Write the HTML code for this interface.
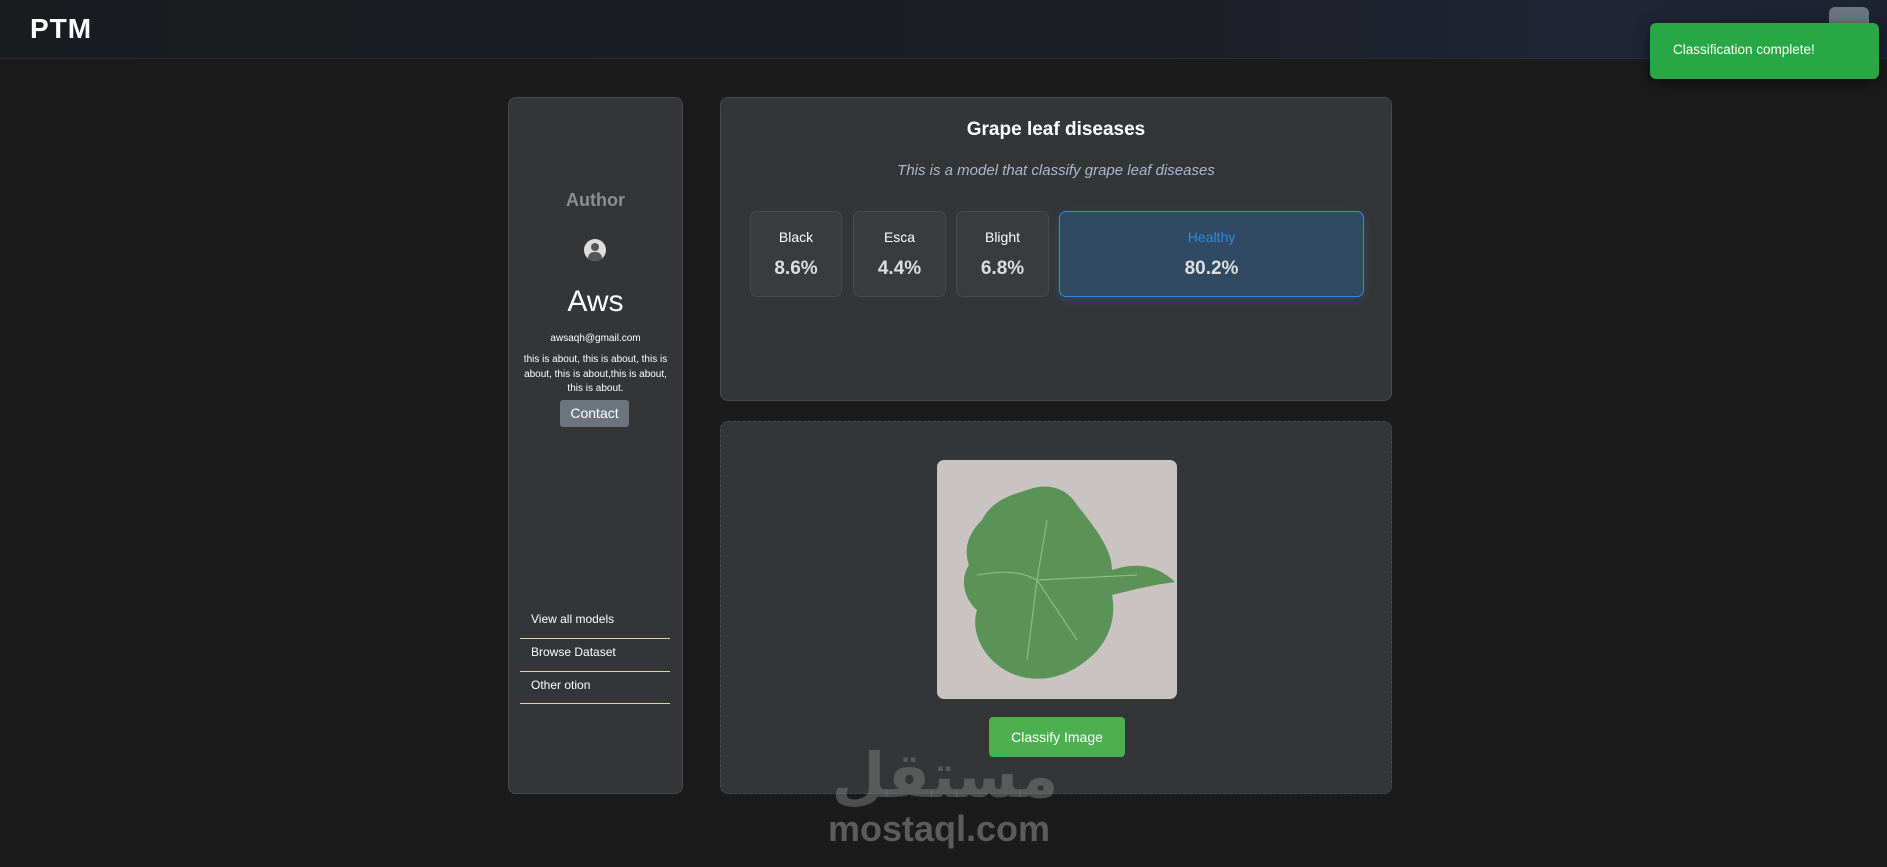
<!DOCTYPE html>
<html><head><meta charset="utf-8"><style>
*{box-sizing:border-box;margin:0;padding:0}
body{width:1887px;height:867px;background:#1b1b1c;font-family:"Liberation Sans",sans-serif;position:relative;overflow:hidden;color:#fff}
.hdr{position:absolute;left:0;top:0;width:1887px;height:59px;background:linear-gradient(90deg,#1a1b1f 0%,#1c1e24 60%,#202536 85%,#1d2130 100%);border-bottom:1px solid #23303a}
.logo{position:absolute;left:30px;top:13px;font-size:28px;font-weight:bold;letter-spacing:1px}
.card{position:absolute;background:#343537;border:1px solid #48494c;border-radius:8px}
.c{position:absolute;text-align:center}
.pc{position:absolute;top:211px;height:86px;background:#3a3b3e;border:1px solid #4a4b4e;border-radius:7px;text-align:center}
.pc .l{position:absolute;top:17px;width:100%;font-size:14px;color:#fff}
.pc .v{position:absolute;top:46px;width:100%;font-size:19px;color:#ddd;font-weight:bold}
.lk{position:absolute;left:520px;width:150px;border-bottom:1px solid #e8d2a8;font-size:12px;color:#fff;padding-left:11px}
</style></head><body>
<div class="hdr"><div class="logo">PTM</div></div>
<div style="position:absolute;left:1829px;top:7px;width:40px;height:30px;background:#6c757d;border-radius:6px"></div>
<div style="position:absolute;left:1650px;top:23px;width:229px;height:56px;background:#28a745;border-radius:6px;box-shadow:0 4px 14px rgba(0,0,0,.5);font-size:13.5px;color:#fff;padding:19px 0 0 23px">Classification complete!</div>

<div class="card" style="left:508px;top:97px;width:175px;height:697px"></div>
<div class="c" style="left:508px;width:175px;top:190px;font-size:18px;font-weight:bold;color:#8e8e8e">Author</div>
<div style="position:absolute;left:584px;top:239px;width:22px;height:22px;border-radius:50%;background:#ddd;overflow:hidden">
 <div style="position:absolute;left:7px;top:4px;width:8px;height:8px;border-radius:50%;background:#555"></div>
 <div style="position:absolute;left:4px;top:13px;width:14px;height:10px;border-radius:6px 6px 0 0;background:#555"></div></div>
<div class="c" style="left:508px;width:175px;top:285px;font-size:30px">Aws</div>
<div class="c" style="left:508px;width:175px;top:333px;font-size:10px">awsaqh@gmail.com</div>
<div class="c" style="left:518px;width:155px;top:353px;font-size:10px;line-height:14.5px">this is about, this is about, this is about, this is about,this is about, this is about.</div>
<div style="position:absolute;left:560px;top:400px;width:69px;height:27px;background:#6c757d;border-radius:3px;font-size:14px;text-align:center;line-height:27px">Contact</div>
<div class="lk" style="top:612px;height:27px">View all models</div>
<div class="lk" style="top:645px;height:27px">Browse Dataset</div>
<div class="lk" style="top:678px;height:26px">Other otion</div>

<div class="card" style="left:720px;top:97px;width:672px;height:304px"></div>
<div class="c" style="left:720px;width:672px;top:119px;font-size:19px;font-weight:bold">Grape leaf diseases</div>
<div class="c" style="left:720px;width:672px;top:162px;font-size:15px;font-style:italic;color:#a9b9d3">This is a model that classify grape leaf diseases</div>
<div class="pc" style="left:750px;width:92px"><div class="l">Black</div><div class="v">8.6%</div></div>
<div class="pc" style="left:853px;width:93px"><div class="l">Esca</div><div class="v">4.4%</div></div>
<div class="pc" style="left:956px;width:93px"><div class="l">Blight</div><div class="v">6.8%</div></div>
<div class="pc" style="left:1059px;width:305px;background:#2f4a62;border-color:#2f8be6;box-shadow:0 3px 10px rgba(47,139,230,.25)"><div class="l" style="color:#2f8be6">Healthy</div><div class="v">80.2%</div></div>

<div class="card" style="left:720px;top:421px;width:672px;height:373px;border-style:dashed"></div>
<div style="position:absolute;left:937px;top:460px;width:240px;height:239px;background:#c9c3c2;border-radius:7px;overflow:hidden">
<svg width="240" height="239" viewBox="0 0 240 239"><path d="M55 200 C40 185 35 165 40 150 C28 140 22 120 32 105 C25 85 35 70 45 60 C55 40 75 35 90 30 C110 22 130 28 140 45 C160 70 175 90 175 110 C190 105 215 100 238 122 C215 125 195 130 175 135 C180 160 170 185 150 200 C120 225 80 225 55 200 Z" fill="#5a9258"/><path d="M40 115 C70 110 85 112 100 120 M100 120 L200 115 M100 120 L110 60 M100 120 L90 200 M100 120 L140 180" stroke="#8cbc86" stroke-width="1.2" fill="none"/></svg></div>
<div style="position:absolute;left:989px;top:717px;width:136px;height:40px;background:#4caf50;border-radius:4px;font-size:14px;text-align:center;line-height:40px">Classify Image</div>

<div style="position:absolute;left:820px;top:735px;width:250px;text-align:center;font-family:'Noto Sans CJK SC','DejaVu Sans',sans-serif;font-size:62px;font-weight:bold;color:rgba(120,120,120,.55);line-height:70px">مستقل</div>
<div style="position:absolute;left:828px;top:808px;font-size:36px;font-weight:bold;color:rgba(120,120,120,.7)">mostaql.com</div>
</body></html>
